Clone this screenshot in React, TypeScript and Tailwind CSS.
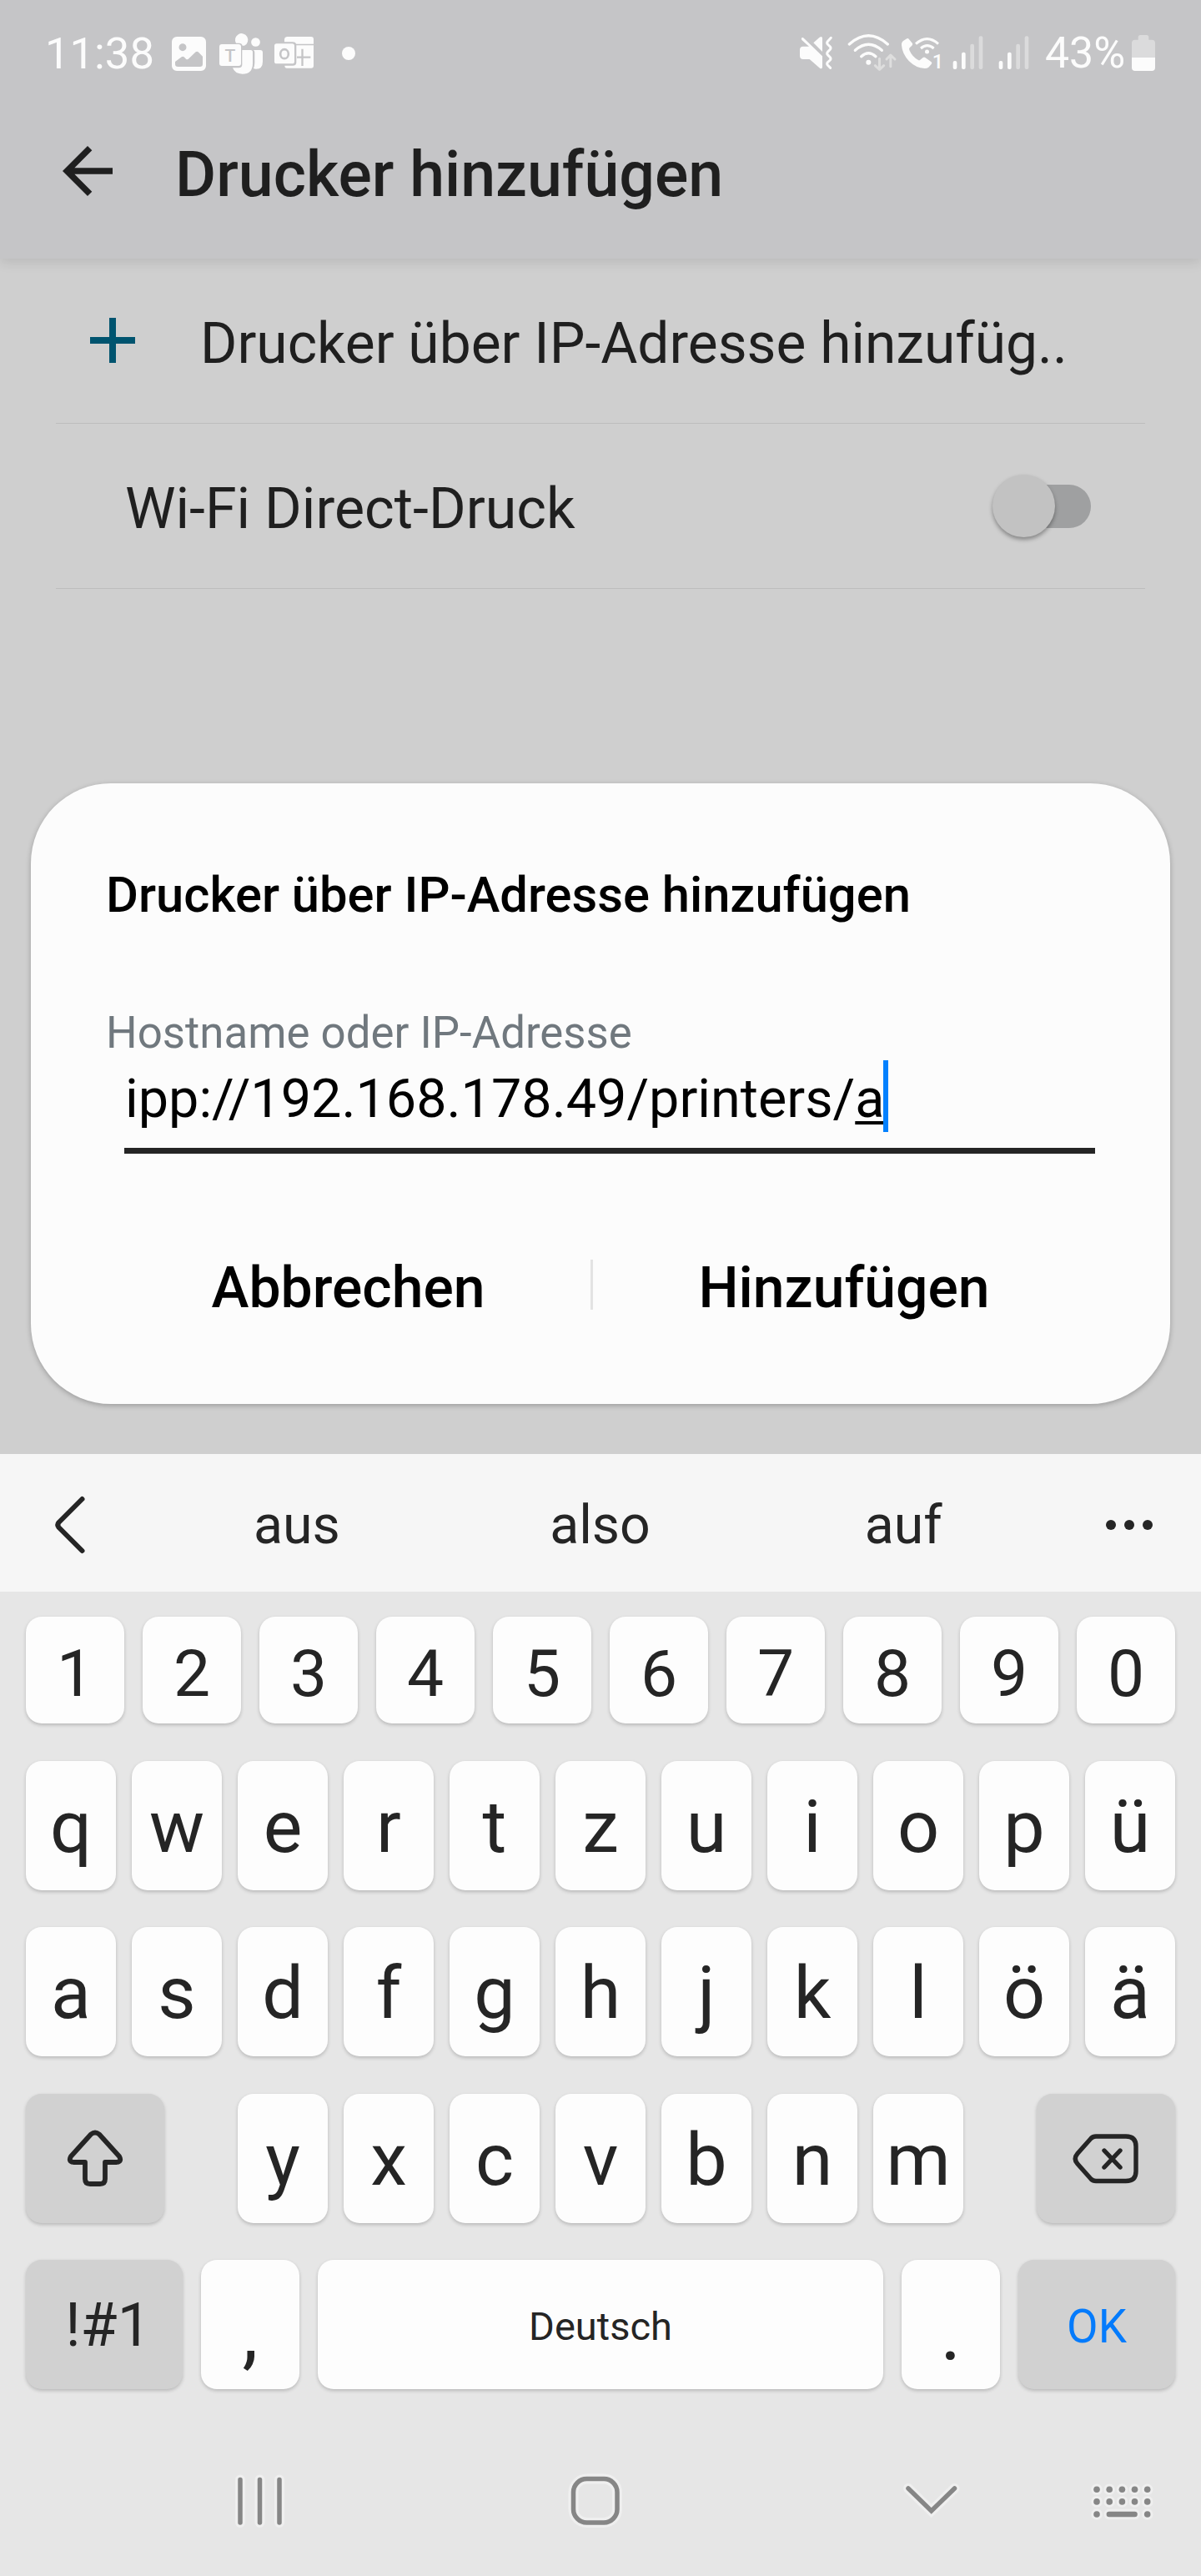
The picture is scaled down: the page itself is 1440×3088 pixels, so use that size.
import type { ReactNode } from "react";

function StatusIcon({ x, w, className, children }: { x: number; w: number; className: string; children: ReactNode }) {
  return (
    <svg viewBox={`${x} 102 ${w} 180`} className={`h-[60px] shrink-0 ${className}`} fill="#fcfcfc">
      {children}
    </svg>
  );
}

function SignalBars({ x, className }: { x: number; className: string }) {
  return (
    <StatusIcon x={x} w={120} className={className}>
      <rect x={x + 8} y="219" width="14" height="30" rx="6" />
      <rect x={x + 39} y="188" width="14" height="61" rx="6" />
      <rect x={x + 70} y="158" width="14" height="91" rx="6" fill="#dbdbdc" />
      <rect x={x + 101} y="130" width="14" height="119" rx="6" fill="#dbdbdc" />
    </StatusIcon>
  );
}

function StatusBar() {
  return (
    <div className="flex h-[128px] items-center text-[#fcfcfc]">
      <span className="ml-[54px] w-[131px] shrink-0 text-[52.6px] leading-[60px]">11:38</span>
      <StatusIcon x={606} w={144} className="ml-[17px] w-[48px]">
        <path
          fillRule="evenodd"
          d="M636 132H723a18 18 0 0 1 18 18V237a18 18 0 0 1-18 18H636a18 18 0 0 1-18-18V150a18 18 0 0 1 18-18ZM657 156.500a13.500 13.500 0 1 0 0 27a13.500 13.500 0 1 0 0-27ZM630 222V231Q630 240 640 240H719Q729 240 729 231V203L713 187Q708.500 183 704 187L679 211Q674 216 669 212L662 205Q657.500 201 653 205Z"
        />
      </StatusIcon>
      <StatusIcon x={780} w={174} className="ml-[10px] w-[58px]">
        <path d="M849 155A23 23 0 1 1 880 163.500Q876 165 872 164Q870 155 860 155Z" />
        <circle cx="919.500" cy="151.500" r="16" />
        <path d="M871 180H902Q909 180 909 188V227Q909 266 872 266Q845 266 837 244H859Q871 244 871 232Z" />
        <path d="M912 180H936Q945 180 945 189V221Q945 248 921 248Q916 248 912 246Q916 236 916 226V188Q916 183 912 180Z" />
        <rect x="789" y="159" width="78" height="78" rx="9" />
        <text x="828" y="222" textAnchor="middle" fontSize="63" fontWeight="500" fill="#c5c5c7">T</text>
      </StatusIcon>
      <StatusIcon x={978} w={159} className="ml-[8px] w-[53px]">
        <path d="M1034 132H1119Q1128 132 1128 141V158H1066Q1062 151 1053 151H1023V143Q1023 132 1034 132Z" />
        <path d="M1066 163H1128V236Q1128 245 1119 245H1032Q1024 245 1024 236H1053Q1066 236 1066 224Z" />
        <path d="M1087.500 176V237M1068 206H1117" stroke="#c5c5c7" strokeWidth="7" />
        <rect x="987" y="157" width="72" height="72" rx="8" />
        <ellipse cx="1023" cy="194" rx="14.500" ry="16.500" fill="none" stroke="#c5c5c7" strokeWidth="8" />
      </StatusIcon>
      <span className="ml-[31px] size-[16px] shrink-0 rounded-full bg-[#fcfcfc]" />

      <StatusIcon x={108} w={132} className="ml-auto w-[44px]">
        <path d="M129 167H150L124 144Q121 138 124 136Q128 134 132 138L198 202V240Q198 250 189 245L152 213H129Q117 213 117 201V179Q117 167 129 167Z" />
        <path d="M166 154L188 134Q198 129 198 138V186Z" />
        <path d="M229 136L217 149Q213 154 217 159L226 168Q230 173 226 178L217 187Q213 192 217 197L226 206Q230 211 226 216L217 224Q213 229 217 234L227 244" fill="none" stroke="#fcfcfc" strokeWidth="9" strokeLinecap="round" />
      </StatusIcon>
      <StatusIcon x={285} w={183} className="ml-[15px] w-[61px]">
        <g fill="none" stroke="#fcfcfc" strokeWidth="10" strokeLinecap="round">
          <path d="M295 159Q364 98 433 159" />
          <path d="M316 181Q364 139 412 181" />
          <path d="M338 203Q364 179 390 203" />
        </g>
        <circle cx="364" cy="224" r="9" />
        <g fill="none" stroke="#dedede" strokeWidth="9" strokeLinecap="round" strokeLinejoin="round">
          <path d="M403.500 211V248M388 236L403.500 250L419 236" />
          <path d="M443.500 239V200M429 213L443.500 198L459 213" />
        </g>
      </StatusIcon>
      <StatusIcon x={477} w={156} className="ml-[3px] w-[52px]">
        <path d="M490 146L502 139Q506 136 509 140L522 156Q524 160 520 164L512 172Q509 176 511 180Q521 204 543 216Q547 218 550 215L560 207Q564 204 568 207L590 223Q594 227 590 231L580 242Q575 246 566 246Q535 245 509 219Q485 193 483 163Q482 151 490 146Z" />
        <path d="M534 158Q575 122 615 158M552 174Q575 154 599 174" fill="none" stroke="#fcfcfc" strokeWidth="9" />
        <circle cx="574.500" cy="186" r="7.500" />
        <text x="593" y="246" fontSize="71" fontWeight="500">1</text>
      </StatusIcon>
      <SignalBars x={660} className="ml-[9px] w-[40px]" />
      <SignalBars x={825} className="ml-[15px] w-[40px]" />
      <span className="ml-[18px] w-[96px] shrink-0 text-[51.8px] leading-[60px]">43%</span>
      <StatusIcon x={1305} w={96} className="mr-[53px] ml-[6px] w-[32px]">
        <path d="M1342 126H1364Q1372 126 1372 134V143H1383Q1395 143 1395 155V207H1311V155Q1311 143 1323 143H1334V134Q1334 126 1342 126Z" fill="#dbdbdc" />
        <path d="M1311 207H1395V243Q1395 255 1383 255H1323Q1311 255 1311 243Z" />
      </StatusIcon>
    </div>
  );
}

function AppHeader() {
  return (
    <header className="relative z-10 h-[310px] bg-[#c5c5c7] shadow-[0_4px_14px_rgba(0,0,0,0.11)]">
      <StatusBar />
      <div className="flex h-[162px] items-center">
        <svg viewBox="0 0 24 24" className="-mt-[8px] ml-[60px] size-[90px]" fill="#1f1f1f">
          <path d="M20 11H7.830l5.590-5.590L12 4l-8 8 8 8 1.410-1.410L7.830 13H20v-2z" />
        </svg>
        <h1 className="ml-[60px] text-[75.3px] leading-[90px] font-medium">Drucker hinzufügen</h1>
      </div>
    </header>
  );
}

function Dialog() {
  return (
    <section className="mt-[233px] mr-[37px] ml-[37px] h-[744px] rounded-[96px] bg-[#fcfcfc] pt-[94px] pr-[90px] pl-[90px] text-black shadow-[0_2px_6px_rgba(0,0,0,0.25)]">
      <h2 className="h-[80px] text-[59.7px] leading-[80px] font-medium whitespace-nowrap">Drucker über IP-Adresse hinzufügen</h2>
      <div className="mt-[93px] h-[65px] text-[52.8px] leading-[65px] text-[#70787e]">Hostname oder IP-Adresse</div>
      <div className="ml-[22px] flex h-[112px] border-b-[7px] border-[#252525]">
        <span className="ml-px text-[64.7px] leading-[92px] whitespace-nowrap">
          ipp://192.168.178.49/printers/<span className="underline decoration-[3.5px] underline-offset-[5px] [text-decoration-skip-ink:none]">a</span>
        </span>
        <span className="-ml-px h-[86px] w-[6px] bg-[#0381fe]" />
      </div>
      <div className="mt-[111px] flex h-[100px] items-center text-[67.8px] leading-[100px] font-medium">
        <button className="w-[581px] shrink-0">Abbrechen</button>
        <span className="-mt-[8px] h-[60px] w-[3px] bg-[#e3e3e3]" />
        <button className="flex-1">Hinzufügen</button>
      </div>
    </section>
  );
}

function Key({ className, children }: { className: string; children: ReactNode }) {
  return (
    <button className={`flex items-center justify-center rounded-[19px] shadow-[0_2px_4px_rgba(0,0,0,0.2)] ${className}`}>
      {children}
    </button>
  );
}

function LetterKeys({ letters }: { letters: string }) {
  return (
    <>
      {letters.split("").map((l) => (
        <Key key={l} className="h-[155px] w-[108px] bg-[#fdfdfd] pt-[3px] text-[88px]">{l}</Key>
      ))}
    </>
  );
}

function ShiftIcon() {
  return (
    <svg viewBox="0 0 70 72" className="h-[72px] w-[70px]" fill="none" stroke="#252525" strokeWidth="5.800" strokeLinejoin="round">
      <path d="M30 6.500Q35 2.500 40 6.500L64 33Q67.500 39 61 40H47V60Q47 66 41 66H29Q23 66 23 60V40H9Q2.500 39 6 33Z" />
    </svg>
  );
}

function BackspaceIcon() {
  return (
    <svg viewBox="0 0 80 62" className="h-[62px] w-[80px]" fill="none" stroke="#252525" strokeWidth="5.400" strokeLinecap="round">
      <path d="M28 4H64Q76 4 76 16V46Q76 57.500 64 57.500H28Q24.500 57.500 22 55L6 37Q0.500 31 6 24.500L22 6.500Q24.500 4 28 4Z" />
      <path d="M38 21L57 41M57 21L38 41" />
    </svg>
  );
}

function Keyboard() {
  return (
    <div className="mt-[60px] flex flex-1 flex-col bg-[#e6e6e6] leading-none text-[#252525]">
      <div className="flex h-[165px] items-center bg-[#f6f6f6] pt-[4px]">
        <svg viewBox="0 0 44 76" className="ml-[62px] h-[76px] w-[44px]" fill="none" stroke="#252525" strokeWidth="6" strokeLinecap="round" strokeLinejoin="round">
          <path d="M36.500 7L8.500 35Q6 38 8.500 41L36.500 69" />
        </svg>
        <div className="ml-[68px] grid w-[1091px] grid-cols-3 text-center text-[64.4px] leading-[80px]">
          <span>aus</span>
          <span>also</span>
          <span>auf</span>
        </div>
        <div className="ml-[61px] flex gap-[10px]">
          <i className="size-[12px] rounded-full bg-[#252525]" />
          <i className="size-[12px] rounded-full bg-[#252525]" />
          <i className="size-[12px] rounded-full bg-[#252525]" />
        </div>
      </div>

      <div className="px-[31px] pt-[30px]">
        <div className="flex justify-between">
          {"1234567890".split("").map((d) => (
            <Key key={d} className="h-[128px] w-[118px] bg-[#fdfdfd] pt-[9px] text-[78.5px]">{d}</Key>
          ))}
        </div>
        <div className="mt-[45px] flex justify-between">
          <LetterKeys letters="qwertzuiopü" />
        </div>
        <div className="mt-[44px] flex justify-between">
          <LetterKeys letters="asdfghjklöä" />
        </div>
        <div className="mt-[45px] flex justify-between">
          <Key className="h-[155px] w-[166px] bg-[#d1d1d1]"><ShiftIcon /></Key>
          <div className="flex gap-[19px]">
            <LetterKeys letters="yxcvbnm" />
          </div>
          <Key className="h-[155px] w-[166px] bg-[#d1d1d1]"><BackspaceIcon /></Key>
        </div>
        <div className="mt-[44px] flex justify-between">
          <Key className="h-[155px] w-[188px] bg-[#d1d1d1] pt-[2px] pl-[9px] text-[71.5px]">!#1</Key>
          <Key className="h-[155px] w-[118px] bg-[#fdfdfd] pt-[16px] text-[96px]">,</Key>
          <Key className="h-[155px] w-[678px] bg-[#fdfdfd] pt-[4px] text-[47px]">Deutsch</Key>
          <Key className="h-[155px] w-[118px] bg-[#fdfdfd] pt-[16px] text-[96px]">.</Key>
          <Key className="h-[155px] w-[188px] bg-[#d1d1d1] pt-[5px] text-[54.600px] text-[#047bfc]">OK</Key>
        </div>
      </div>

      <NavBar />
    </div>
  );
}

function NavIcon({ w, className, children }: { w: number; className: string; children: ReactNode }) {
  return (
    <svg viewBox={`0 0 ${w} 80`} className={`h-[80px] shrink-0 ${className}`} fill="none" strokeLinecap="round">
      <g stroke="#efefef" strokeWidth="12">{children}</g>
      <g stroke="#868686" strokeWidth="5.500">{children}</g>
    </svg>
  );
}

function NavBar() {
  const dots = [8, 23.2, 38.4, 53.5, 68.7];
  return (
    <nav className="mt-auto flex h-[181px] items-center">
      <NavIcon w={64} className="ml-[279px] w-[64px]">
        <path d="M9 14.500V66M32.500 14.500V66M56 14.500V66" />
      </NavIcon>
      <NavIcon w={74} className="ml-[333px] w-[74px]">
        <rect x="11.500" y="13.500" width="52.500" height="52.500" rx="16" />
      </NavIcon>
      <NavIcon w={74} className="ml-[330px] w-[74px]">
        <path d="M9 25L36.700 52L64.500 25" />
      </NavIcon>
      <svg viewBox="0 0 78 80" className="ml-[153px] h-[80px] w-[78px]">
        {[0, 1].map((layer) => (
          <g key={layer} fill={layer ? "#868686" : "#efefef"} stroke={layer ? "none" : "#efefef"} strokeWidth="6">
            {dots.map((x) => <circle key={`a${x}`} cx={x} cy="26.200" r="3.800" />)}
            {dots.map((x) => <circle key={`b${x}`} cx={x} cy="40.900" r="3.800" />)}
            <circle cx="8" cy="56" r="3.800" />
            <rect x="19.600" y="52.700" width="37.200" height="6.600" rx="3.300" />
            <circle cx="68.700" cy="56" r="3.800" />
          </g>
        ))}
      </svg>
    </nav>
  );
}

export default function App() {
  return (
    <div className="flex h-[3088px] w-[1440px] flex-col overflow-hidden bg-[#cfcfcf] font-[Roboto,sans-serif] text-[#1f1f1f]">
      <AppHeader />
      <div className="mx-[67px] flex h-[198px] items-center border-b border-[#bdbdbd]">
        <svg viewBox="0 0 54 54" className="-mt-[2px] ml-[41px] size-[54px]" stroke="#00546f" strokeWidth="8">
          <path d="M27 0V54M0 27H54" />
        </svg>
        <span className="mt-[6px] ml-[78px] text-[67.7px] leading-[90px] whitespace-nowrap">Drucker über IP-Adresse hinzufüg..</span>
      </div>
      <div className="mx-[67px] flex h-[198px] items-center border-b border-[#bdbdbd]">
        <span className="mt-[6px] ml-[83px] text-[68.2px] leading-[90px] whitespace-nowrap">Wi-Fi Direct-Druck</span>
        <span className="mr-[65px] ml-auto flex h-[52px] w-[112px] items-center rounded-full bg-[#9fa0a1]">
          <span className="-ml-[6px] size-[75px] shrink-0 rounded-full bg-[#c2c2c2] shadow-[0_3px_5px_rgba(0,0,0,0.35)]" />
        </span>
      </div>
      <Dialog />
      <Keyboard />
    </div>
  );
}
